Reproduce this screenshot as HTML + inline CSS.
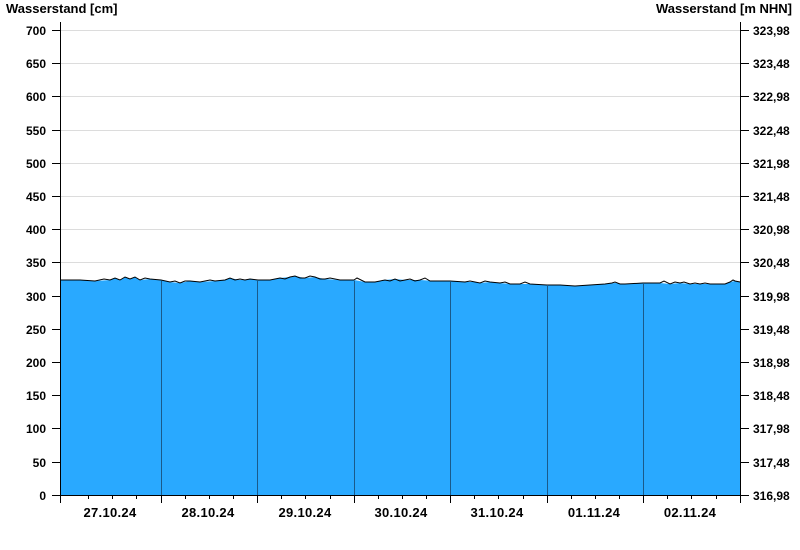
<!DOCTYPE html>
<html><head><meta charset="utf-8"><style>
body{margin:0;background:#fff;}
svg{display:block;font-family:"Liberation Sans",Arial,sans-serif;font-weight:bold;font-size:12px;fill:#000}
.d{font-size:13px;letter-spacing:0.3px}
</style></head><body>
<svg width="800" height="550" xmlns="http://www.w3.org/2000/svg">
<rect width="800" height="550" fill="#fff"/>
<text x="6" y="13" style="font-size:13px">Wasserstand [cm]</text>
<text x="792" y="13" text-anchor="end" style="font-size:13px">Wasserstand [m NHN]</text>
<g stroke="#dcdcdc" stroke-width="1">
<line x1="61" y1="30.5" x2="740" y2="30.5"/><line x1="61" y1="63.5" x2="740" y2="63.5"/><line x1="61" y1="96.5" x2="740" y2="96.5"/><line x1="61" y1="130.5" x2="740" y2="130.5"/><line x1="61" y1="163.5" x2="740" y2="163.5"/><line x1="61" y1="196.5" x2="740" y2="196.5"/><line x1="61" y1="229.5" x2="740" y2="229.5"/><line x1="61" y1="262.5" x2="740" y2="262.5"/>
</g>
<path d="M61,495 L61,280 L80,280 L95,281 L110,280 L115,278 L120,280 L125,277 L130,279 L135,277 L140,280 L150,279 L161,280 L170,282 L180,283 L190,281 L200,282 L215,281 L225,280 L230,278 L240,280 L250,279 L258,280 L270,280 L280,278 L290,277 L295,276 L305,278 L315,277 L325,279 L340,280 L354,280 L365,282 L375,282 L385,280 L395,279 L405,280 L420,280 L435,281 L450,281 L465,282 L475,282 L480,283 L490,282 L500,283 L510,284 L520,284 L530,284 L547,285 L560,285 L575,286 L590,285 L605,284 L615,283 L625,284 L643,283 L660,283 L670,284 L680,283 L690,284 L700,284 L710,284 L725,284 L730,282 L735,281 L740,282 L740,495 Z" fill="#29a9ff" stroke="none"/>
<polyline fill="none" stroke="#000" stroke-width="1" points="61,280 80,280 95,281 104,279 110,280 115,278 120,280 125,277 130,279 135,277 140,280 145,278 150,279 161,280 170,282 175,281 180,283 185,281 190,281 200,282 210,280 215,281 225,280 230,278 235,280 240,279 245,280 250,279 258,280 270,280 280,278 285,279 290,277 295,276 300,278 305,278 310,276 315,277 320,279 325,279 330,278 340,280 354,280 357,278 365,282 375,282 385,280 390,281 395,279 400,281 405,280 410,279 415,281 420,280 425,278 430,281 435,281 450,281 465,282 470,281 475,282 480,283 485,281 490,282 500,283 505,282 510,284 520,284 525,282 530,284 547,285 560,285 575,286 590,285 605,284 612,283 615,282 620,284 625,284 643,283 660,283 664,281 670,284 675,282 680,283 684,282 690,284 695,283 700,284 705,283 710,284 725,284 730,282 733,280 735,281 740,282"/>
<g stroke="#1a5a8a" stroke-width="1">
<line x1="161.5" y1="281" x2="161.5" y2="495"/><line x1="257.5" y1="281" x2="257.5" y2="495"/><line x1="354.5" y1="281" x2="354.5" y2="495"/><line x1="450.5" y1="282" x2="450.5" y2="495"/><line x1="547.5" y1="285" x2="547.5" y2="495"/><line x1="643.5" y1="284" x2="643.5" y2="495"/>
</g>
<g stroke="#000" stroke-width="1">
<line x1="60.5" y1="22" x2="60.5" y2="496"/>
<line x1="740.5" y1="22" x2="740.5" y2="496"/>
<line x1="52" y1="495.5" x2="741" y2="495.5"/>
<line x1="52" y1="30.5" x2="60" y2="30.5"/><line x1="52" y1="63.5" x2="60" y2="63.5"/><line x1="52" y1="96.5" x2="60" y2="96.5"/><line x1="52" y1="130.5" x2="60" y2="130.5"/><line x1="52" y1="163.5" x2="60" y2="163.5"/><line x1="52" y1="196.5" x2="60" y2="196.5"/><line x1="52" y1="229.5" x2="60" y2="229.5"/><line x1="52" y1="262.5" x2="60" y2="262.5"/><line x1="52" y1="296.5" x2="60" y2="296.5"/><line x1="52" y1="329.5" x2="60" y2="329.5"/><line x1="52" y1="362.5" x2="60" y2="362.5"/><line x1="52" y1="395.5" x2="60" y2="395.5"/><line x1="52" y1="428.5" x2="60" y2="428.5"/><line x1="52" y1="462.5" x2="60" y2="462.5"/>
<line x1="741" y1="30.5" x2="749" y2="30.5"/><line x1="741" y1="63.5" x2="749" y2="63.5"/><line x1="741" y1="96.5" x2="749" y2="96.5"/><line x1="741" y1="130.5" x2="749" y2="130.5"/><line x1="741" y1="163.5" x2="749" y2="163.5"/><line x1="741" y1="196.5" x2="749" y2="196.5"/><line x1="741" y1="229.5" x2="749" y2="229.5"/><line x1="741" y1="262.5" x2="749" y2="262.5"/><line x1="741" y1="296.5" x2="749" y2="296.5"/><line x1="741" y1="329.5" x2="749" y2="329.5"/><line x1="741" y1="362.5" x2="749" y2="362.5"/><line x1="741" y1="395.5" x2="749" y2="395.5"/><line x1="741" y1="428.5" x2="749" y2="428.5"/><line x1="741" y1="462.5" x2="749" y2="462.5"/><line x1="741" y1="495.5" x2="749" y2="495.5"/>
<line x1="60.5" y1="495" x2="60.5" y2="503"/>
<line x1="161.5" y1="495" x2="161.5" y2="503"/><line x1="257.5" y1="495" x2="257.5" y2="503"/><line x1="354.5" y1="495" x2="354.5" y2="503"/><line x1="450.5" y1="495" x2="450.5" y2="503"/><line x1="547.5" y1="495" x2="547.5" y2="503"/><line x1="643.5" y1="495" x2="643.5" y2="503"/><line x1="740.5" y1="495" x2="740.5" y2="503"/>
<line x1="88.5" y1="495" x2="88.5" y2="499"/><line x1="112.5" y1="495" x2="112.5" y2="499"/><line x1="136.5" y1="495" x2="136.5" y2="499"/>
<line x1="185.5" y1="495" x2="185.5" y2="499"/><line x1="209.5" y1="495" x2="209.5" y2="499"/><line x1="233.5" y1="495" x2="233.5" y2="499"/>
<line x1="281.5" y1="495" x2="281.5" y2="499"/><line x1="305.5" y1="495" x2="305.5" y2="499"/><line x1="330.5" y1="495" x2="330.5" y2="499"/>
<line x1="378.5" y1="495" x2="378.5" y2="499"/><line x1="402.5" y1="495" x2="402.5" y2="499"/><line x1="426.5" y1="495" x2="426.5" y2="499"/>
<line x1="474.5" y1="495" x2="474.5" y2="499"/><line x1="498.5" y1="495" x2="498.5" y2="499"/><line x1="523.5" y1="495" x2="523.5" y2="499"/>
<line x1="571.5" y1="495" x2="571.5" y2="499"/><line x1="595.5" y1="495" x2="595.5" y2="499"/><line x1="619.5" y1="495" x2="619.5" y2="499"/>
<line x1="667.5" y1="495" x2="667.5" y2="499"/><line x1="691.5" y1="495" x2="691.5" y2="499"/><line x1="716.5" y1="495" x2="716.5" y2="499"/>
</g>
<g text-anchor="end">
<text x="46" y="35">700</text><text x="46" y="68">650</text><text x="46" y="101">600</text><text x="46" y="135">550</text><text x="46" y="168">500</text><text x="46" y="201">450</text><text x="46" y="234">400</text><text x="46" y="267">350</text><text x="46" y="301">300</text><text x="46" y="334">250</text><text x="46" y="367">200</text><text x="46" y="400">150</text><text x="46" y="433">100</text><text x="46" y="467">50</text><text x="46" y="500">0</text>
</g>
<g>
<text x="753" y="35">323,98</text><text x="753" y="68">323,48</text><text x="753" y="101">322,98</text><text x="753" y="135">322,48</text><text x="753" y="168">321,98</text><text x="753" y="201">321,48</text><text x="753" y="234">320,98</text><text x="753" y="267">320,48</text><text x="753" y="301">319,98</text><text x="753" y="334">319,48</text><text x="753" y="367">318,98</text><text x="753" y="400">318,48</text><text x="753" y="433">317,98</text><text x="753" y="467">317,48</text><text x="753" y="500">316,98</text>
</g>
<g text-anchor="middle" class="d">
<text x="110" y="517">27.10.24</text><text x="208" y="517">28.10.24</text><text x="305" y="517">29.10.24</text><text x="401" y="517">30.10.24</text><text x="497" y="517">31.10.24</text><text x="594" y="517">01.11.24</text><text x="690" y="517">02.11.24</text>
</g>
</svg>
</body></html>
